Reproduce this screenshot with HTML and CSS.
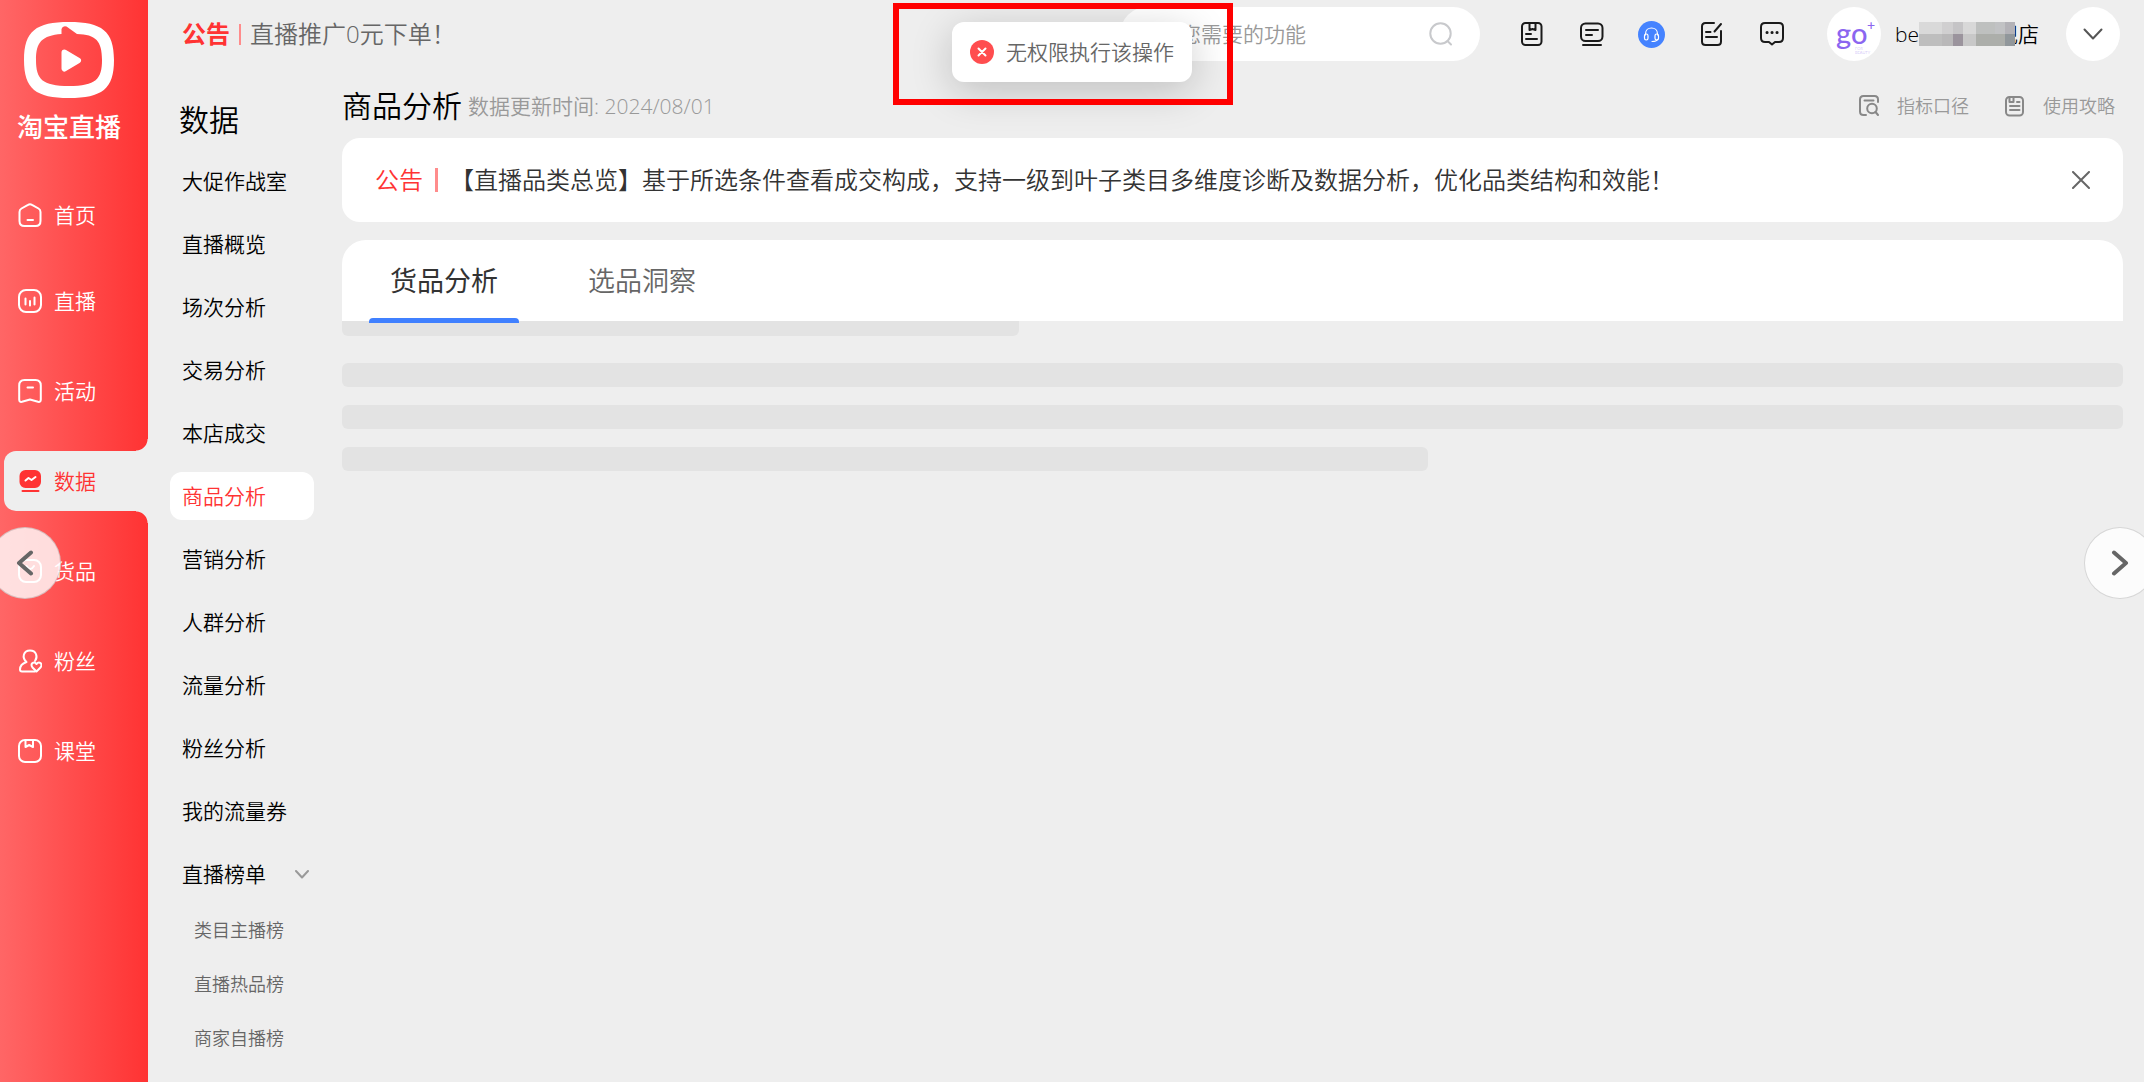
FILE: index.html
```html
<!DOCTYPE html>
<html lang="zh-CN">
<head>
    <meta charset="UTF-8">
    <meta name="viewport" content="width=device-width, initial-scale=1.0">
    <title>淘宝直播</title>
    <link rel="stylesheet" href="styles.css">
</head>
<body>

<div class="app-container">
    <aside class="sidebar">
        <a class="brand" href="#">
            <svg width="90" height="76" viewBox="0 0 90 76">
                <path fill="#fff" fill-rule="evenodd" d="M45 0C78 0 90 9 90 38S78 76 45 76 0 67 0 38 12 0 45 0ZM37.500 7Q38.500 3.500 42.500 4.500L53 12C72 12.500 78 19 78 38S72 64 45 64 12 57 12 38C12 20 18 13.500 37.500 12Z"/>
                <path fill="#fff" stroke="#fff" stroke-width="6" stroke-linejoin="round" d="M40.500 30.500 54 38.500 40.500 46.500Z"/>
            </svg>
            <span>淘宝直播</span>
        </a>
        <nav class="side-nav">
            <a class="side-item" href="#">
                <svg class="side-icon" viewBox="0 0 24 24"><path d="M10 1.800Q12 .600 14 1.800L20.500 5.500Q22.500 6.700 22.500 9V18Q22.500 23 17.500 23H6.500Q1.500 23 1.500 18V9Q1.500 6.700 3.500 5.500ZM9.500 17H15"/></svg>
                <span>首页</span>
            </a>
        </nav>
        <nav class="side-nav">
            <a class="side-item" href="#">
                <svg class="side-icon" viewBox="0 0 24 24"><rect x="1" y="1" width="22" height="22" rx="7"/><path d="M7.500 9.500V15.500M12 12V16.500M16.500 8.500V15.500"/></svg>
                <span>直播</span>
            </a>
            <a class="side-item" href="#">
                <svg class="side-icon" viewBox="0 0 24 24"><path d="M6.500 1H17.500Q22.800 1 22.800 6.500V20.500Q22.800 23.500 20 22.800L12 20.500 4 22.800Q1.200 23.500 1.200 20.500V6.500Q1.200 1 6.500 1ZM9.500 8.500H15"/></svg>
                <span>活动</span>
            </a>
            <a class="side-item active" href="#">
                <svg class="side-icon" viewBox="0 0 24 24"><rect x="2.500" y="2" width="19.500" height="16" rx="5" fill="currentColor"/><path d="M4.500 22H20.500"/><path stroke="#fff" d="M7.500 11.500 10.500 9 13.500 11 17.500 8"/></svg>
                <span>数据</span>
            </a>
            <a class="side-item" href="#">
                <svg class="side-icon" viewBox="0 0 24 24"><rect x="1" y="1" width="22" height="22" rx="7"/><path d="M8.500 7Q12.300 13 16 7"/></svg>
                <span>货品</span>
            </a>
            <a class="side-item" href="#">
                <svg class="side-icon" viewBox="0 0 24 24"><path d="M8.500 13C3.500 8.500 5.500 1.500 12 1.500S20 8 17 12M8.500 13C4 14.500 2 17.500 2 20.500Q2 22.500 4 22.500H17"/><path d="M18.500 22.500 14.500 18.500C11.500 14.500 16 12 18.500 15 21 12 25.500 14.500 22.500 18.500Z"/></svg>
                <span>粉丝</span>
            </a>
            <a class="side-item" href="#">
                <svg class="side-icon" viewBox="0 0 24 24"><rect x="1" y="1" width="22" height="22" rx="6"/><path d="M7.500 1.500V8L11.200 6 15 8V1.500"/></svg>
                <span>课堂</span>
            </a>
        </nav>
    </aside>

    <div class="page">
        <header class="topbar">
            <div class="promo">
                <strong>公告</strong>
                <i class="divider"></i>
                <span>直播推广0元下单！</span>
            </div>
            <label class="search">
                <input type="text" aria-label="搜索功能" placeholder="搜索您需要的功能">
                <svg width="24" height="24" viewBox="0 0 24 24"><circle cx="11.500" cy="11.500" r="10.200"/><path d="M18.500 19 22 22.500"/></svg>
            </label>
            <div class="tools">
                <button class="tool" aria-label="手册">
                    <svg viewBox="0 0 24 24"><rect x="2" y="1" width="19.500" height="22" rx="3.500"/><path d="M9.500 1V8L12.500 7 15.500 8V1M6 12H11M6 17H17"/></svg>
                </button>
                <button class="tool" aria-label="资讯">
                    <svg viewBox="0 0 24 24"><rect x="1" y="1.500" width="21.500" height="17.500" rx="4.500"/><path d="M6 8H18M6 13H12M3 23H21"/></svg>
                </button>
                <button class="tool" aria-label="客服">
                    <svg class="service" viewBox="0 0 27 27"><circle cx="13.500" cy="13.500" r="13.500" fill="#4583ff" stroke="none"/><path d="M7.500 14V13C7.500 5 19.500 5 19.500 13V14M19.500 18.500Q18.500 20.500 14 20.500"/><rect x="6.500" y="13" width="3.500" height="6" rx="1.700"/><rect x="17" y="13" width="3.500" height="6" rx="1.700"/></svg>
                </button>
                <button class="tool" aria-label="反馈">
                    <svg viewBox="0 0 24 24"><path d="M14 1H5.500Q2 1 2 4.500V19.500Q2 23 5.500 23H17.500Q21 23 21 19.500V9M21 2 14.500 9.500M6 10H10.500M6 15H17"/></svg>
                </button>
                <button class="tool" aria-label="消息">
                    <svg viewBox="0 0 24 24"><path d="M5 1H19Q23 1 23 5V16Q23 20 19 20H15L12 22.500 9 20H5Q1 20 1 16V5Q1 1 5 1Z"/><path class="dots" d="M7 10.500H7.100M12 10.500H12.100M17 10.500H17.100"/></svg>
                </button>
            </div>
            <div class="account">
                <svg class="avatar" viewBox="0 0 54 54">
                    <circle cx="27" cy="27" r="27" fill="#fff"/>
                    <text x="9" y="37" font-size="29" font-weight="500">go</text>
                    <text x="40" y="23" font-size="14" font-weight="500">+</text>
                    <text x="28" y="43" font-size="4" opacity=".6">FOR</text>
                    <text x="28" y="47" font-size="4" opacity=".6">BEAUTY</text>
                </svg>
                <span class="account-name">be<svg class="mosaic" width="96" height="24" viewBox="0 0 96 24" shape-rendering="crispEdges">
                    <path fill="#d9d9d9" d="M0 0H23V12H0Z"/><path fill="#d0cfd0" d="M23 0H34V12H23Z"/><path fill="#c5c4c6" d="M34 0H44V12H34Z"/><path fill="#d8d8d8" d="M44 0H57V12H44Z"/><path fill="#bec0bf" d="M57 0H76V12H57Z"/><path fill="#c1c2c4" d="M76 0H86V12H76Z"/><path fill="#b3b2b7" d="M86 0H96V12H86Z"/>
                    <path fill="#bebebe" d="M0 12H23V24H0Z"/><path fill="#b9b8b9" d="M23 12H34V24H23Z"/><path fill="#9b949d" d="M34 12H44V24H34Z"/><path fill="#c8c8c8" d="M44 12H57V24H44Z"/><path fill="#acaeaa" d="M57 12H86V24H57Z"/><path fill="#91979b" d="M86 12H96V24H86Z"/>
                </svg>舰店</span>
                <button class="account-toggle" aria-label="展开账号菜单">
                    <svg width="20" height="12" viewBox="0 0 20 12"><path d="M1.500 1.500 10 10.500 18.500 1.500"/></svg>
                </button>
            </div>
        </header>

        <div class="content">
            <nav class="sub-nav">
                <h2>数据</h2>
                <a href="#">大促作战室</a>
                <a href="#">直播概览</a>
                <a href="#">场次分析</a>
                <a href="#">交易分析</a>
                <a href="#">本店成交</a>
                <a class="active" href="#">商品分析</a>
                <a href="#">营销分析</a>
                <a href="#">人群分析</a>
                <a href="#">流量分析</a>
                <a href="#">粉丝分析</a>
                <a href="#">我的流量券</a>
                <a class="expandable" href="#">
                    直播榜单
                    <svg width="14" height="9" viewBox="0 0 14 9"><path d="M1 1 7 7.500 13 1"/></svg>
                </a>
                <div class="sub-links">
                    <a href="#">类目主播榜</a>
                    <a href="#">直播热品榜</a>
                    <a href="#">商家自播榜</a>
                </div>
            </nav>

            <main class="main">
                <div class="page-head">
                    <h1>商品分析</h1>
                    <span class="update-time">数据更新时间: 2024/08/01</span>
                    <div class="page-links">
                        <a href="#">
                            <svg viewBox="0 0 20 22"><path d="M7 20H4.500Q1 20 1 16.500V4.500Q1 1 4.500 1H15.500Q19 1 19 4.500V7M5.500 5.500H14.500"/><circle cx="13" cy="13.500" r="4.800"/><path d="M16.500 17 19 20"/></svg>
                            <span>指标口径</span>
                        </a>
                        <a href="#">
                            <svg viewBox="0 0 20 22"><rect x="1" y="2" width="17" height="18.500" rx="3.500"/><path d="M4.500 2.500V7H8.500V2.500M12 7H14.500M5 11H14.500M5 15H14.500"/></svg>
                            <span>使用攻略</span>
                        </a>
                    </div>
                </div>

                <section class="notice">
                    <span class="notice-tag">公告</span>
                    <i class="divider"></i>
                    <p>【直播品类总览】基于所选条件查看成交构成，支持一级到叶子类目多维度诊断及数据分析，优化品类结构和效能！</p>
                    <button class="notice-close" aria-label="关闭">
                        <svg width="18" height="18" viewBox="0 0 18 18"><path d="M1 1 17 17M17 1 1 17"/></svg>
                    </button>
                </section>

                <div class="tabs" role="tablist">
                    <button class="tab active" role="tab" aria-selected="true">货品分析</button>
                    <button class="tab" role="tab" aria-selected="false">选品洞察</button>
                </div>

                <div class="skeleton">
                    <div class="bar bar-title"></div>
                    <div class="bar"></div>
                    <div class="bar"></div>
                    <div class="bar bar-short"></div>
                </div>
            </main>
        </div>
    </div>
</div>

<div class="toast" role="alert">
    <svg width="24" height="24" viewBox="0 0 24 24"><circle cx="12" cy="12" r="12" fill="#ff4d4f"/><path stroke="#fff" stroke-width="2" stroke-linecap="round" d="M8.500 8.500 15.500 15.500M15.500 8.500 8.500 15.500"/></svg>
    <span>无权限执行该操作</span>
</div>
<div class="highlight-box"></div>

<button class="slide-btn slide-prev" aria-label="上一张">
    <svg width="18" height="26" viewBox="0 0 18 26"><path d="M15 2.500 3 13 15 23.500"/></svg>
</button>
<button class="slide-btn slide-next" aria-label="下一张">
    <svg width="18" height="26" viewBox="0 0 18 26"><path d="M3 2.500 15 13 3 23.500"/></svg>
</button>

</body>
</html>
```

FILE: styles.css
```css
/* Base Styles */
:root {
    --bg-color: #eeeeee;
    --text-color: #000;
    --muted: #666;
    --light: #999;
    --red: #ff3333;
    --blue: #4080ff;
    --card: #ffffff;
    --bar: #e3e3e3;
}

* {
    box-sizing: border-box;
}

body {
    margin: 0;
    font-family: "Open Sans", "Noto Sans CJK SC", sans-serif;
    font-weight: 350;
    font-size: 21px;
    line-height: 30px;
    background-color: var(--bg-color);
    color: var(--text-color);
    overflow: hidden;
}

a {
    color: inherit;
    text-decoration: none;
}

button {
    padding: 0;
    border: none;
    background: none;
    font: inherit;
    color: inherit;
    cursor: pointer;
}

svg {
    display: block;
    flex: none;
    fill: none;
    stroke-linecap: round;
    stroke-linejoin: round;
}

.app-container {
    display: flex;
    min-height: 100vh;
}

/* Red Sidebar */
.sidebar {
    flex: none;
    width: 148px;
    padding-top: 22px;
    background: linear-gradient(90deg, #ff6666, #ff3333);
    color: #fff;
}

.brand {
    display: flex;
    flex-direction: column;
    align-items: center;
    gap: 12px;
    height: 163px;
    padding-right: 10px;
    font-size: 26px;
    font-weight: 500;
    line-height: 34px;
}

.side-nav {
    display: flex;
    flex-direction: column;
    gap: 30px;
}

.side-nav + .side-nav {
    margin-top: 26px;
}

.side-item {
    position: relative;
    display: flex;
    align-items: center;
    gap: 12px;
    height: 60px;
    margin-left: 4px;
    padding-left: 14px;
    border-radius: 12px 0 0 12px;
}

.side-icon {
    width: 24px;
    height: 24px;
    stroke: currentColor;
    stroke-width: 2;
}

.side-item.active {
    background-color: var(--bg-color);
    color: var(--red);
}

/* Rounded inner corners above and below the active item */
.side-item.active::before,
.side-item.active::after {
    content: "";
    position: absolute;
    right: 0;
    width: 12px;
    height: 12px;
}

.side-item.active::before {
    bottom: 100%;
    background: radial-gradient(circle at 0 0, transparent 11px, var(--bg-color) 12px);
}

.side-item.active::after {
    top: 100%;
    background: radial-gradient(circle at 0 100%, transparent 11px, var(--bg-color) 12px);
}

.page {
    flex: 1;
    min-width: 0;
    padding: 7px 21px 0 22px;
}

/* Top Bar */
.topbar {
    display: flex;
    align-items: center;
    height: 54px;
    padding: 0 3px 0 12px;
}

.promo {
    display: flex;
    align-items: center;
    gap: 9px;
    color: var(--muted);
    font-size: 24px;
}

.promo strong {
    color: var(--red);
    font-weight: 700;
}

.divider {
    width: 2px;
    height: 21px;
    background-color: #ff8c8c;
}

.search {
    display: flex;
    align-items: center;
    width: 360px;
    height: 54px;
    margin-left: auto;
    padding: 0 27px 0 18px;
    border-radius: 27px;
    background-color: var(--card);
}

.search input {
    flex: 1;
    min-width: 0;
    padding: 0;
    border: none;
    outline: none;
    background: none;
    font: inherit;
}

.search input::placeholder {
    color: var(--light);
}

.search svg {
    stroke: #c8c9cc;
    stroke-width: 2;
}

.tools {
    display: flex;
    margin: 0 25px 0 22px;
}

.tool {
    display: flex;
    align-items: center;
    justify-content: center;
    width: 60px;
    height: 54px;
}

.tool svg {
    width: 24px;
    height: 24px;
    stroke: #1a1a1a;
    stroke-width: 2;
}

.tool .service {
    width: 27px;
    height: 27px;
    stroke: #fff;
    stroke-width: 1.2;
}

.tool .dots {
    stroke-width: 3;
}

.account {
    display: flex;
    align-items: center;
}

.avatar {
    width: 54px;
    height: 54px;
    fill: #8b66f0;
    font-family: Lato, sans-serif;
}

.account-name {
    display: flex;
    align-items: center;
    margin: 0 27px 0 14px;
}

.mosaic {
    position: relative;
    margin-right: -18px;
}

.account-toggle {
    display: flex;
    align-items: center;
    justify-content: center;
    width: 54px;
    height: 54px;
    border-radius: 50%;
    background-color: var(--card);
}

.account-toggle svg {
    stroke: #555;
    stroke-width: 2;
}

.content {
    display: flex;
    gap: 28px;
}

/* Secondary Menu */
.sub-nav {
    display: flex;
    flex-direction: column;
    flex: none;
    gap: 15px;
    width: 144px;
    padding-top: 37px;
}

.sub-nav h2 {
    margin: 0;
    padding-left: 9px;
    font-size: 30px;
    font-weight: 350;
    line-height: 44px;
}

.sub-nav a {
    padding-left: 12px;
    border-radius: 12px;
    line-height: 48px;
}

.sub-nav a.active {
    background-color: var(--card);
    color: var(--red);
}

.sub-nav .expandable {
    display: flex;
    align-items: center;
    justify-content: space-between;
    padding-right: 5px;
}

.expandable svg {
    stroke: var(--light);
    stroke-width: 2;
}

.sub-links {
    display: flex;
    flex-direction: column;
    margin-top: -10px;
    padding-left: 12px;
    color: var(--muted);
    font-size: 18px;
}

.sub-links a {
    line-height: 54px;
}

/* Main Area */
.main {
    flex: 1;
    min-width: 0;
    padding-top: 23px;
}

.page-head {
    display: flex;
    align-items: center;
    gap: 6px;
    height: 44px;
    margin-bottom: 10px;
}

.page-head h1 {
    margin: 0;
    font-size: 30px;
    font-weight: 350;
    line-height: 44px;
}

.update-time {
    color: var(--light);
}

.page-links {
    display: flex;
    gap: 36px;
    margin-left: auto;
    padding-right: 8px;
    color: var(--light);
    font-size: 18px;
}

.page-links a {
    display: flex;
    align-items: center;
    gap: 18px;
}

.page-links svg {
    width: 20px;
    height: 22px;
    stroke: #888;
    stroke-width: 2;
}

.notice {
    display: flex;
    align-items: center;
    height: 84px;
    margin-bottom: 18px;
    padding: 0 33px;
    border-radius: 18px;
    background-color: var(--card);
    color: #333;
    font-size: 24px;
}

.notice-tag {
    color: var(--red);
}

.notice .divider {
    width: 3px;
    height: 24px;
    margin: 0 12px;
}

.notice p {
    flex: 1;
    margin: 0;
}

.notice-close svg {
    stroke: #666;
    stroke-width: 2;
}

.tabs {
    display: flex;
    gap: 48px;
    height: 81px;
    padding: 0 27px;
    border-radius: 24px 24px 0 0;
    background-color: var(--card);
    font-size: 27px;
}

.tab {
    position: relative;
    width: 150px;
    color: var(--muted);
}

.tab.active {
    color: #333;
    font-weight: 400;
}

.tab.active::after {
    content: "";
    position: absolute;
    left: 0;
    right: 0;
    bottom: -2px;
    height: 5px;
    border-radius: 4px 4px 0 0;
    background-color: var(--blue);
}

/* Loading Placeholder */
.skeleton {
    display: flex;
    flex-direction: column;
    gap: 18px;
}

.bar {
    height: 24px;
    border-radius: 6px;
    background-color: var(--bar);
}

.bar-title {
    width: 38%;
    height: 15px;
    margin-bottom: 9px;
    border-radius: 0 0 6px 6px;
}

.bar-short {
    width: 61%;
}

/* Toast */
.toast {
    position: absolute;
    top: 22px;
    left: 50%;
    z-index: 10;
    display: flex;
    align-items: center;
    gap: 12px;
    height: 60px;
    padding: 0 18px;
    border-radius: 12px;
    background-color: var(--card);
    box-shadow: 0 9px 42px rgba(0, 0, 0, 0.2);
    color: var(--muted);
    white-space: nowrap;
    transform: translateX(-50%);
}

.highlight-box {
    position: absolute;
    top: 3px;
    left: calc(50% - 179px);
    z-index: 11;
    width: 340px;
    height: 102px;
    border: 6px solid #ff0000;
    pointer-events: none;
}

/* Slide Buttons */
.slide-btn {
    position: fixed;
    top: 527px;
    z-index: 5;
    display: flex;
    align-items: center;
    justify-content: center;
    width: 72px;
    height: 72px;
    border: 1px solid rgba(0, 0, 0, 0.15);
    border-radius: 50%;
    background-color: rgba(255, 255, 255, 0.8);
}

.slide-btn svg {
    stroke: #666;
    stroke-width: 4;
}

.slide-prev {
    left: -11px;
}

.slide-next {
    right: -12px;
}
```
